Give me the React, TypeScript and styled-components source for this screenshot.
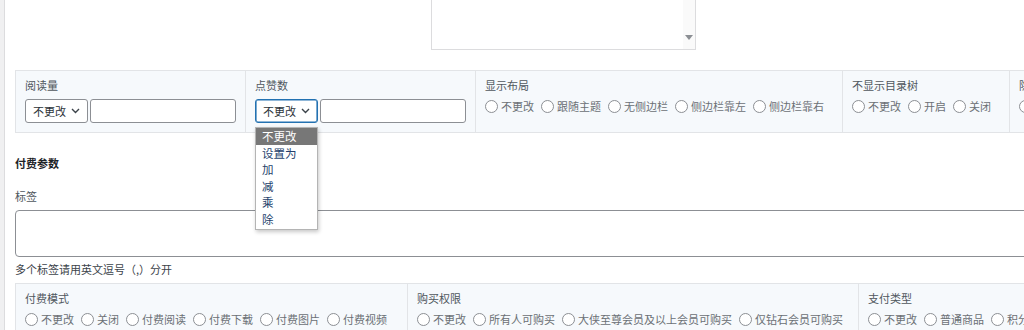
import styled, { createGlobalStyle } from "styled-components";

const GlobalStyle = createGlobalStyle`
  html, body {
    margin: 0;
    padding: 0;
    background: #fff;
    overflow: hidden;
  }
  body {
    font-family: "Noto Sans CJK SC", "Noto Sans", "Liberation Sans", sans-serif;
    font-size: 11px;
    color: #50575e;
  }
`;

const Page = styled.div`
  display: flex;
  width: 1200px;
  min-height: 330px;
`;

const SideEdge = styled.div`
  width: 4px;
  flex-shrink: 0;
  background: #f0f0f1;
  border-right: 1px solid #dcdcde;
`;

const Content = styled.div`
  flex: 1;
  padding-left: 10px;
  display: flex;
  flex-direction: column;
  & > * {
    flex-shrink: 0;
  }
`;

const ListRow = styled.div`
  display: flex;
  padding-left: 416px;
`;

const ListBox = styled.div`
  width: 263px;
  height: 49px;
  border: 1px solid #dcdcde;
  border-top: none;
  display: flex;
  justify-content: flex-end;
`;

const ListScroll = styled.div`
  width: 12px;
  background: #fafafa;
  display: flex;
  align-items: flex-end;
  justify-content: center;
  padding-bottom: 9px;
  box-sizing: border-box;
`;

const Panel = styled.div<{ $top: number }>`
  display: flex;
  margin-top: ${(p) => p.$top}px;
  border: 1px solid #e2e4e7;
  background: #f6f9fc;
`;

const Cell = styled.div<{ $w?: number }>`
  box-sizing: border-box;
  ${(p) => (p.$w ? `width: ${p.$w}px;` : "flex: 1;")}
  flex-shrink: 0;
  padding: 6px 9px 9px 9px;
  border-right: 1px solid #e2e4e7;
  &:last-child {
    border-right: none;
  }
`;

const CellLabel = styled.div`
  font-size: 11px;
  line-height: 16px;
  color: #50575e;
  white-space: nowrap;
  margin-bottom: 6px;
`;

const Controls = styled.div`
  display: flex;
  gap: 2px;
  height: 24px;
`;

const SelectWrap = styled.div`
  position: relative;
`;

const SelectBox = styled.div<{ $focus?: boolean }>`
  box-sizing: border-box;
  width: 63px;
  height: 24px;
  border: 1px solid ${(p) => (p.$focus ? "#2271b1" : "#8c8f94")};
  box-shadow: ${(p) => (p.$focus ? "inset 0 0 0 0.6px #2271b1" : "none")};
  border-radius: 3px;
  background: #fff;
  display: flex;
  align-items: center;
  padding: 0 7px 0 7px;
  justify-content: space-between;
  color: #2c3338;
  font-size: 11px;
`;

const TextInput = styled.div`
  box-sizing: border-box;
  width: 146px;
  height: 24px;
  border: 1px solid #8c8f94;
  border-radius: 3px;
  background: #fff;
`;

const DropList = styled.div`
  position: absolute;
  top: 28px;
  left: 0;
  width: 63px;
  box-sizing: border-box;
  background: #fff;
  border: 1px solid #b4b4b4;
  box-shadow: 1px 2px 4px rgba(0, 0, 0, 0.22);
  padding: 0 0 2px 0;
  z-index: 3;
`;

const DropItem = styled.div<{ $active?: boolean }>`
  height: 16.5px;
  line-height: 16px;
  padding-left: 6px;
  font-size: 11.5px;
  color: ${(p) => (p.$active ? "#fff" : "#243f6c")};
  background: ${(p) => (p.$active ? "#777777" : "transparent")};
  white-space: nowrap;
`;

const Radios = styled.div`
  display: flex;
  align-items: center;
  height: 14px;
  gap: 7px;
  white-space: nowrap;
`;

const RadioOpt = styled.div`
  display: flex;
  align-items: center;
  gap: 3px;
  color: #6b7075;
  font-size: 11px;
`;

const RadioDot = styled.span`
  display: inline-block;
  box-sizing: border-box;
  width: 13px;
  height: 13px;
  border-radius: 50%;
  border: 1px solid #8c8f94;
  background: #fff;
`;

const Heading = styled.div<{ $top: number; $bold?: boolean }>`
  margin-top: ${(p) => p.$top}px;
  line-height: 16px;
  font-size: 11px;
  font-weight: ${(p) => (p.$bold ? 700 : 400)};
  color: ${(p) => (p.$bold ? "#1d2327" : "#50575e")};
`;

const TagArea = styled.div`
  margin-top: 6px;
  height: 47px;
  box-sizing: border-box;
  border: 1px solid #8c8f94;
  border-radius: 4px;
  background: #fff;
`;

const Hint = styled.div`
  margin-top: 4px;
  line-height: 16px;
  font-size: 11px;
  color: #3c434a;
`;

const Chevron = () => (
  <svg width="9" height="6" viewBox="0 0 9 6">
    <path d="M1 1 L4.5 4.5 L8 1" fill="none" stroke="#3c434a" strokeWidth="1.4" />
  </svg>
);

const RadioGroup = ({ items }: { items: string[] }) => (
  <Radios>
    {items.map((t) => (
      <RadioOpt key={t}>
        <RadioDot />
        {t}
      </RadioOpt>
    ))}
  </Radios>
);

const ops = ["不更改", "设置为", "加", "减", "乘", "除"];

export default function App() {
  return (
    <>
      <GlobalStyle />
      <Page>
        <SideEdge />
        <Content>
          <ListRow>
            <ListBox>
              <ListScroll>
                <svg width="8" height="5" viewBox="0 0 8 5">
                  <path d="M0 0 L8 0 L4 5 Z" fill="#8c8f94" />
                </svg>
              </ListScroll>
            </ListBox>
          </ListRow>

          <Panel $top={20}>
            <Cell $w={230}>
              <CellLabel>阅读量</CellLabel>
              <Controls>
                <SelectWrap>
                  <SelectBox>
                    不更改
                    <Chevron />
                  </SelectBox>
                </SelectWrap>
                <TextInput />
              </Controls>
            </Cell>
            <Cell $w={230}>
              <CellLabel>点赞数</CellLabel>
              <Controls>
                <SelectWrap>
                  <SelectBox $focus>
                    不更改
                    <Chevron />
                  </SelectBox>
                  <DropList>
                    {ops.map((o, i) => (
                      <DropItem key={o} $active={i === 0}>
                        {o}
                      </DropItem>
                    ))}
                  </DropList>
                </SelectWrap>
                <TextInput />
              </Controls>
            </Cell>
            <Cell $w={367}>
              <CellLabel>显示布局</CellLabel>
              <RadioGroup items={["不更改", "跟随主题", "无侧边栏", "侧边栏靠左", "侧边栏靠右"]} />
            </Cell>
            <Cell $w={167}>
              <CellLabel>不显示目录树</CellLabel>
              <RadioGroup items={["不更改", "开启", "关闭"]} />
            </Cell>
            <Cell>
              <CellLabel>隐藏侧边栏</CellLabel>
              <RadioGroup items={["不更改", "开启", "关闭"]} />
            </Cell>
          </Panel>

          <Heading $top={22} $bold>
            付费参数
          </Heading>
          <Heading $top={17}>标签</Heading>
          <TagArea />
          <Hint>多个标签请用英文逗号（,）分开</Hint>

          <Panel $top={6}>
            <Cell $w={392}>
              <CellLabel>付费模式</CellLabel>
              <RadioGroup items={["不更改", "关闭", "付费阅读", "付费下载", "付费图片", "付费视频"]} />
            </Cell>
            <Cell $w={451}>
              <CellLabel>购买权限</CellLabel>
              <RadioGroup items={["不更改", "所有人可购买", "大侠至尊会员及以上会员可购买", "仅钻石会员可购买"]} />
            </Cell>
            <Cell>
              <CellLabel>支付类型</CellLabel>
              <RadioGroup items={["不更改", "普通商品", "积分商品"]} />
            </Cell>
          </Panel>
        </Content>
      </Page>
    </>
  );
}
